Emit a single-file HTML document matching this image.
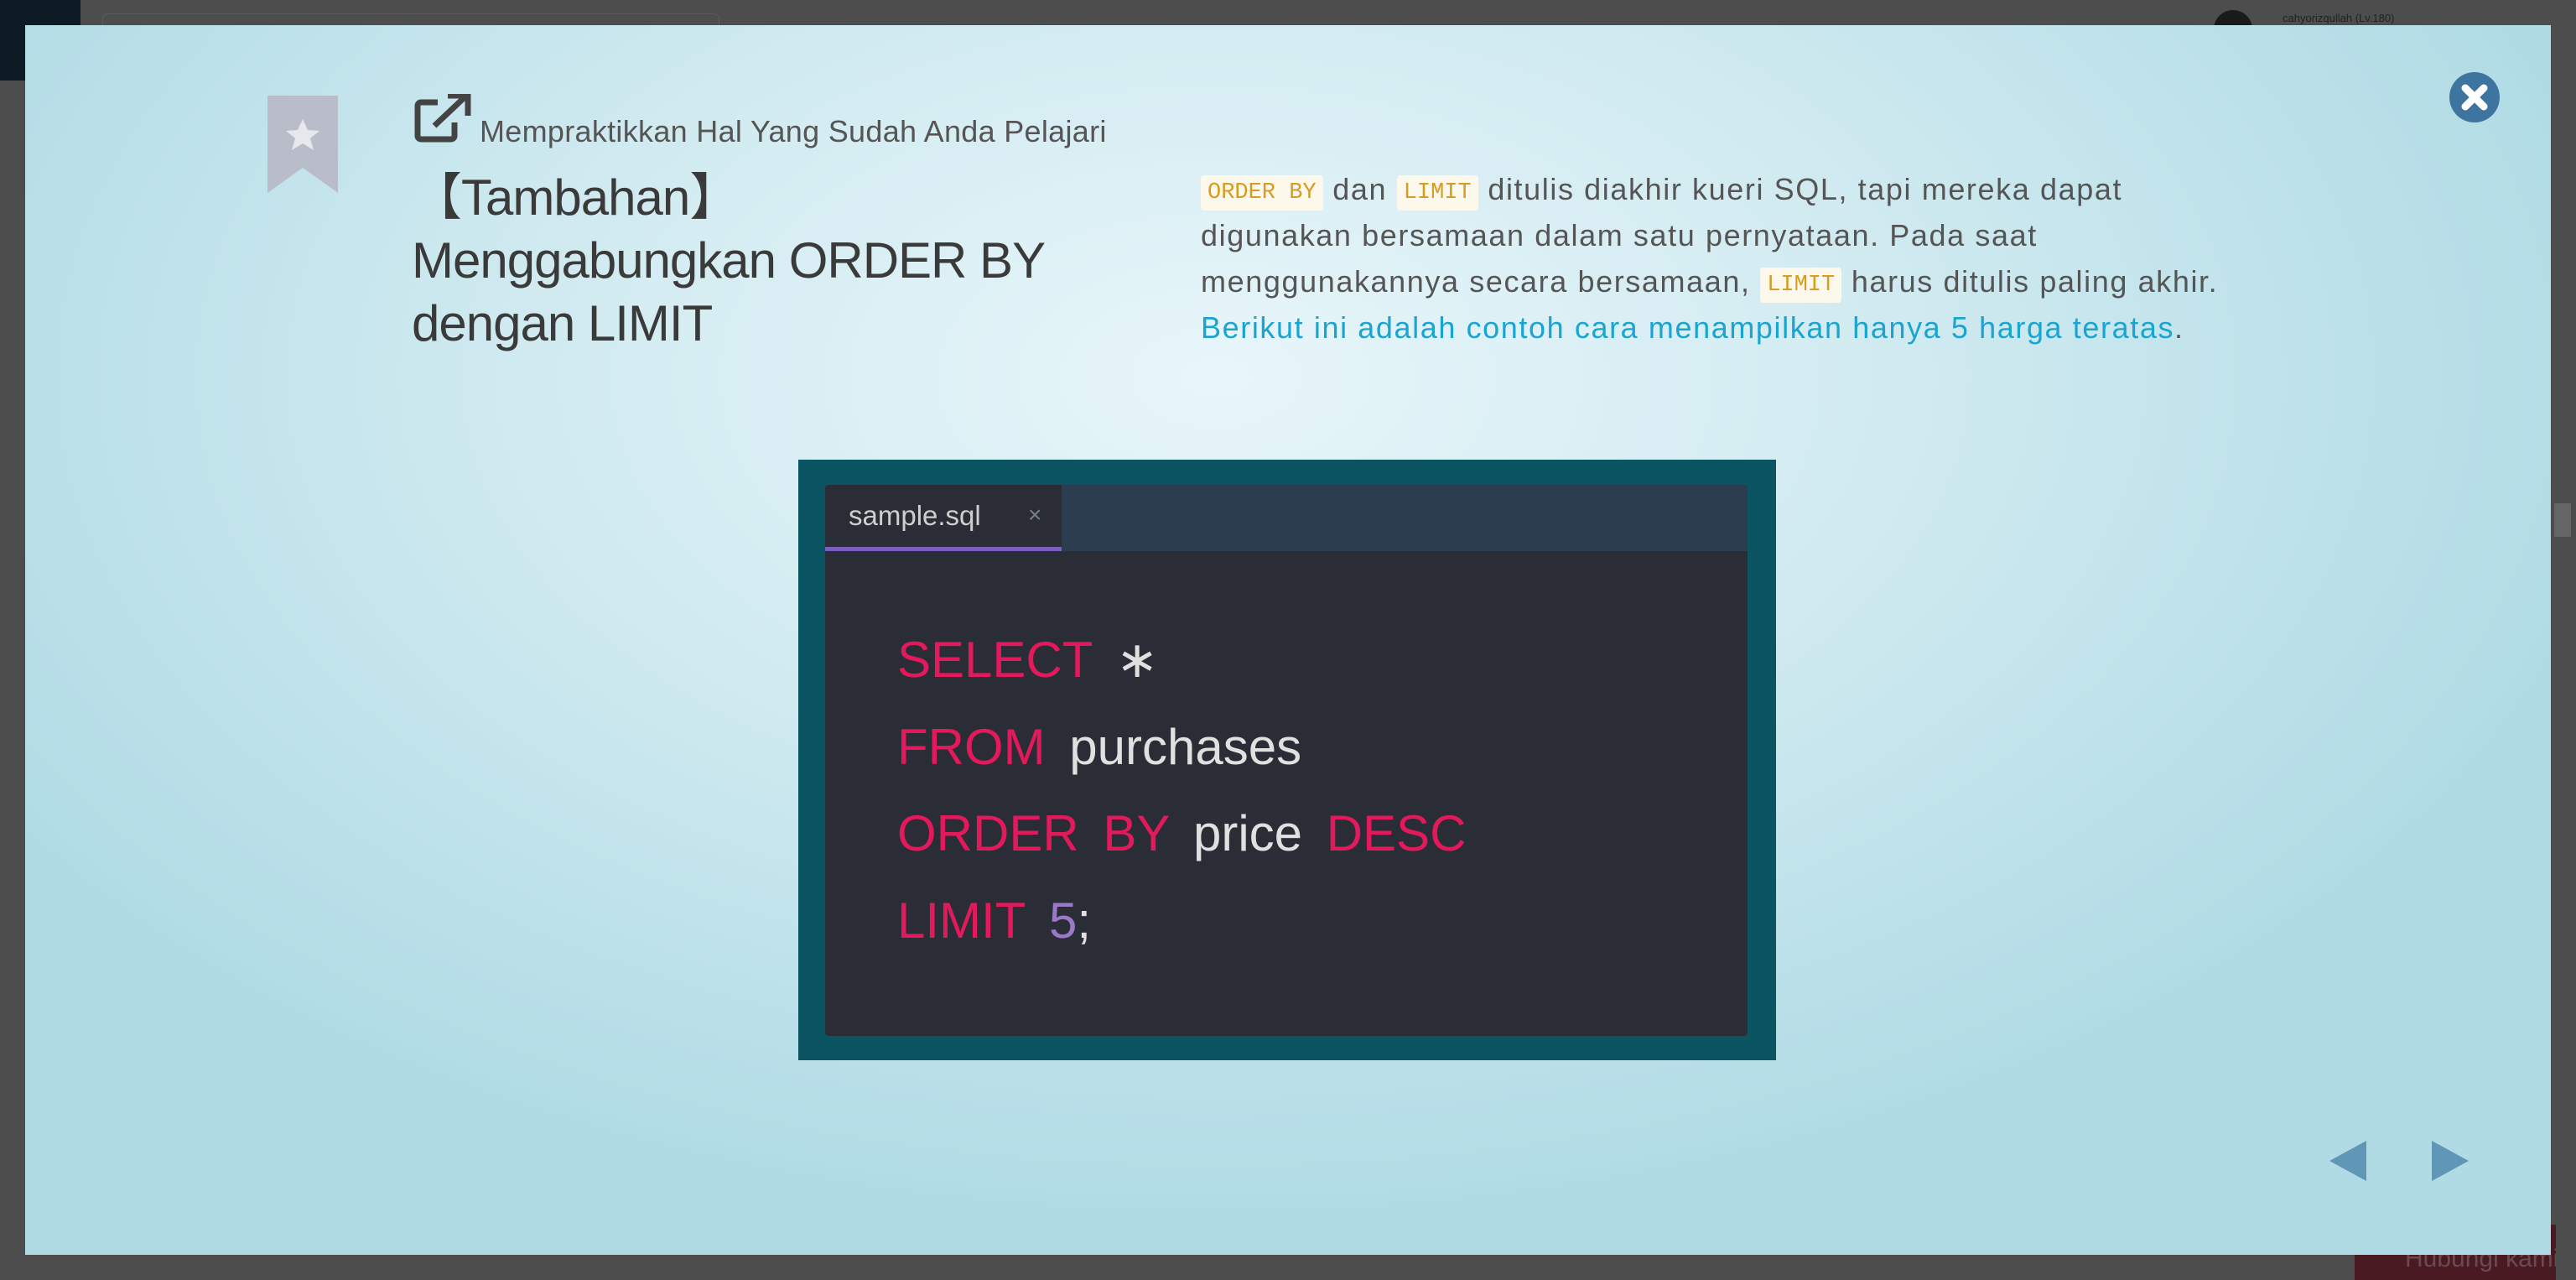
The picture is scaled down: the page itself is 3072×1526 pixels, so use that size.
<!DOCTYPE html>
<html><head><meta charset="utf-8"><style>
*{margin:0;padding:0;box-sizing:border-box}
body{width:3072px;height:1526px;overflow:hidden;background:#4d4d4d;position:relative;font-family:"Liberation Sans",sans-serif}
.abs{position:absolute}
#modal{left:30px;top:30px;width:3012px;height:1466px;background:radial-gradient(ellipse 1700px 1000px at 1420px 420px,#e8f6fa 0%,#d2ebf1 45%,#b0dbe5 100%);overflow:hidden}
.chip{font-family:"Liberation Mono",monospace;color:#d89c22;background:#fdf8ec;border-radius:4px;padding:6px 8px;font-size:27px;line-height:30px;display:inline-block;vertical-align:2px;letter-spacing:0}
.code{font-family:"Liberation Sans",sans-serif;font-size:60px;position:absolute;left:86px;color:#e0e0e0;word-spacing:12px}
.k{color:#e2195b}
</style></head><body>
<div class="abs" style="left:0;top:0;width:96px;height:96px;background:#0e1a24"></div>
<div class="abs" style="left:122px;top:16px;width:736px;height:40px;border:1px solid #5a5a5a;border-radius:6px"></div>
<div class="abs" style="left:2640px;top:12px;width:46px;height:46px;border-radius:50%;background:#1a1a1a"></div>
<div class="abs" style="left:2722px;top:14px;font-size:13px;color:#222">cahyorizqullah (Lv.180)</div>
<div class="abs" style="left:3046px;top:600px;width:20px;height:40px;background:#666"></div>
<div class="abs" style="left:2808px;top:1460px;width:240px;height:66px;background:#4a1a22;color:#6a4a50;font-size:30px;padding:24px 0 0 60px;white-space:nowrap;overflow:hidden">Hubungi kami.</div>

<div id="modal" class="abs">
 <svg class="abs" style="left:289px;top:84px" width="84" height="116" viewBox="0 0 84 116"><path d="M0 0H84V116L42 86L0 116Z" fill="#b9bdc9"/><path d="M42 28l6 13 14 1-11 9 4 14-13-8-13 8 4-14-11-9 14-1z" fill="#e6e8ee"/></svg>
 <svg class="abs" style="left:464px;top:82px" width="68" height="58" viewBox="0 0 68 58"><path d="M28 10H8a4 4 0 0 0-4 4v36a4 4 0 0 0 4 4h36a4 4 0 0 0 4-4V34" fill="none" stroke="#444" stroke-width="7"/><path d="M24 38L60 4M40 2h24v24" fill="none" stroke="#444" stroke-width="7"/></svg>
 <div class="abs" style="left:542px;top:106px;font-size:36px;letter-spacing:0.3px;color:#555">Mempraktikkan Hal Yang Sudah Anda Pelajari</div>
 <div class="abs" style="left:461px;top:168px;font-size:60px;line-height:75px;color:#3a3a3a;font-family:'Liberation Sans','Noto Sans CJK JP',sans-serif;letter-spacing:-1px">【Tambahan】<br>Menggabungkan ORDER BY<br>dengan LIMIT</div>
 <div class="abs" style="left:1402px;top:168px;white-space:nowrap;font-size:36px;letter-spacing:1.6px;line-height:55px;color:#555">
  <span class="chip">ORDER BY</span> dan <span class="chip">LIMIT</span> ditulis diakhir kueri SQL, tapi mereka dapat<br>digunakan bersamaan dalam satu pernyataan. Pada saat<br>menggunakannya secara bersamaan, <span class="chip">LIMIT</span> harus ditulis paling akhir.<br><span style="color:#19a5d2">Berikut ini adalah contoh cara menampilkan hanya 5 harga teratas</span>.
 </div>
 <svg class="abs" style="left:2891px;top:56px" width="60" height="60" viewBox="0 0 60 60"><circle cx="30" cy="30" r="30" fill="#3e74a0"/><path d="M19 19L41 41M41 19L19 41" stroke="#fff" stroke-width="9" stroke-linecap="round"/></svg>
 <div class="abs" style="left:922px;top:518px;width:1166px;height:716px;background:#0b5563">
  <div class="abs" style="left:32px;top:30px;width:1100px;height:657px;background:#2a2d35;border-radius:4px;overflow:hidden">
   <div class="abs" style="left:0;top:0;width:1100px;height:79px;background:#2b3d4f"></div>
   <div class="abs" style="left:0;top:0;width:282px;height:79px;background:#2a2d35;border-bottom:5px solid #7b5fc0"></div>
   <div class="abs" style="left:28px;top:18px;font-size:33px;color:#cfcfcf">sample.sql</div>
   <div class="abs" style="left:242px;top:20px;font-size:28px;color:#7a8088">×</div>
   <div class="code" style="top:174px"><span class="k">SELECT</span> ∗</div>
   <div class="code" style="top:278px"><span class="k">FROM</span> purchases</div>
   <div class="code" style="top:381px"><span class="k">ORDER BY</span> price <span class="k">DESC</span></div>
   <div class="code" style="top:485px"><span class="k">LIMIT</span> <span style="color:#9b78c8">5</span>;</div>
  </div>
 </div>
 <svg class="abs" style="left:2748px;top:1330px" width="44" height="48"><path d="M44 0V48L0 24Z" fill="#6096b6"/></svg>
 <svg class="abs" style="left:2870px;top:1330px" width="44" height="48"><path d="M0 0V48L44 24Z" fill="#6096b6"/></svg>
</div>
</body></html>
